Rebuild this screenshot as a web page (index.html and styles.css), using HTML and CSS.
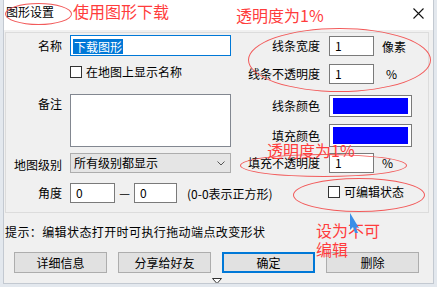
FILE: index.html
```html
<!DOCTYPE html>
<html>
<head>
    <meta charset="utf-8">
    <link rel="stylesheet" href="styles.css">
</head>
<body>
    <div class="dialog">
        <div class="titlebar">
            <span class="title">图形设置</span>
            <span class="close">
                <svg width="11" height="11" viewBox="0 0 11 11"><path d="M0.5 0.5 L10.5 10.5 M10.5 0.5 L0.5 10.5" stroke="#111" stroke-width="1.1"/></svg>
            </span>
        </div>
        <div class="content">
            <div class="groupbox">
                <!-- row 1 -->
                <div class="lbl row1 col1">名称</div>
                <div class="field focus row1 col2"><span class="sel">下载图形</span></div>
                <div class="lbl lbl-r row1 col3 top1">线条宽度</div>
                <div class="field num row1 col4 top1">1</div>
                <div class="unit row1 col5 unit-low">像素</div>

                <!-- row 2 -->
                <div class="check row2 col23">
                    <span class="box"></span>在地图上显示名称
                </div>
                <div class="lbl lbl-r row2 col3">线条不透明度</div>
                <div class="field num row2 col4">1</div>
                <div class="unit pct row2 col5">%</div>

                <!-- rows 3 / 4 -->
                <div class="lbl row3 col1">备注</div>
                <div class="memo row34 col2"></div>
                <div class="lbl lbl-r row3 col3 top1 h22">线条颜色</div>
                <div class="swatch row3 col45 top1"><span></span></div>
                <div class="lbl lbl-r row4 col3 h23">填充颜色</div>
                <div class="swatch tall row4 col45"><span></span></div>

                <!-- row 5 -->
                <div class="lbl row5 col1 h24">地图级别</div>
                <div class="select row5 col2">
                    所有级别都显示
                    <svg class="chev" width="8" height="5" viewBox="0 0 8 5"><path d="M0.5 0.5 L4 4 L7.5 0.5" fill="none" stroke="#555" stroke-width="1"/></svg>
                </div>
                <div class="lbl lbl-r row5 col3">填充不透明度</div>
                <div class="field num row5 col4">1</div>
                <div class="unit row5 col5">%</div>

                <!-- row 6 -->
                <div class="lbl row6 col1">角度</div>
                <div class="angle row6 col24">
                    <div class="field num a1">0</div>
                    <span class="dash">—</span>
                    <div class="field num a2">0</div>
                    <span class="note">(0-0表示正方形)</span>
                </div>
                <div class="check edit row6 col45">
                    <span class="box"></span>可编辑状态
                </div>
            </div>

            <div class="hint">提示：编辑状态打开时可执行拖动端点改变形状</div>

            <div class="buttons">
                <button class="btn">详细信息</button>
                <button class="btn">分享给好友</button>
                <button class="btn default">确定</button>
                <button class="btn">删除</button>
            </div>

            <div class="grip">
                <svg width="10" height="6" viewBox="0 0 10 6"><path d="M0.5 0.5 L9.5 0.5 L5 5.5 Z" fill="#fff" stroke="#333" stroke-width="1"/></svg>
            </div>
        </div>

        <!-- red annotations drawn on top of the dialog -->
        <div class="ring ring-title"></div>
        <div class="ring ring-line"></div>
        <div class="ring ring-fill"></div>
        <div class="ring ring-edit"></div>
        <div class="mark mark-download">使用图形下载</div>
        <div class="mark mark-alpha1">透明度为1%</div>
        <div class="mark mark-alpha2">透明度为1%</div>
        <div class="mark mark-edit">设为不可<br>编辑</div>
        <svg class="pointer" width="11" height="21" viewBox="0 0 11 21">
            <path d="M1 0 L10 15 L6.5 14 L9 20 L6 20 L4 14 L1 17 Z" fill="#3a8fe8"/>
        </svg>
    </div>
</body>
</html>
```

FILE: styles.css
```css
body {
    margin: 0;
    background-color: #e3e8ee;
    font-family: "Noto Sans CJK SC", "Noto Sans", sans-serif;
    font-size: 12px;
    color: #000;
}

.dialog {
    position: relative;
    width: 429px;
    height: 283px;
    margin-left: 3px;
    background-color: #f0f0f0;
    border-left: 1px solid #c3c9d1;
    border-right: 1px solid #c3c9d1;
    border-bottom: 1px solid #c3c9d1;
    overflow: hidden;
}

/* Title bar */
.titlebar {
    height: 30px;
    background-color: #fff;
    display: flex;
    justify-content: space-between;
    align-items: flex-start;
    padding: 4px 0 0 2px;
    box-sizing: border-box;
    line-height: 16px;
}

.close {
    margin: 4px 9px 0 0;
    height: 11px;
}

.close svg {
    display: block;
}

.content {
    padding: 2px 4px 0 1px;
}

/* Group box with the form fields */
.groupbox {
    border: 1px solid #dcdcdc;
    padding: 2px 0 9px 0;
    display: grid;
    grid-template-columns: 64px 161px 98px 45px 1fr;
    grid-template-rows: 29px 30px 30px 29px 30px 20px;
}

.row1 { grid-row: 1; }
.row2 { grid-row: 2; }
.row3 { grid-row: 3; }
.row4 { grid-row: 4; }
.row34 { grid-row: 3 / 5; }
.row5 { grid-row: 5; }
.row6 { grid-row: 6; }

.col1 { grid-column: 1; }
.col2 { grid-column: 2; }
.col3 { grid-column: 3; }
.col4 { grid-column: 4; }
.col5 { grid-column: 5; }
.col23 { grid-column: 2 / 4; }
.col24 { grid-column: 2 / 4; }
.col45 { grid-column: 4 / 6; }

.top1 { margin-top: 1px; }

.lbl {
    text-align: right;
    padding-right: 8px;
    line-height: 20px;
    white-space: nowrap;
    align-self: start;
}

.lbl-r {
    padding-right: 9px;
}

.row1.col1 { line-height: 21px; }
.row1.col3 { line-height: 19px; }
.h22 { line-height: 22px; }
.h23 { line-height: 23px; }
.h24 { line-height: 24px; }

/* Text boxes */
.field {
    box-sizing: border-box;
    height: 20px;
    background-color: #fff;
    border: 1px solid #7a7a7a;
    line-height: 18px;
    align-self: start;
}

.field.num {
    padding-left: 5px;
}

.field.focus {
    height: 21px;
    border-color: #0078d7;
    padding: 2px 0 0 2px;
}

.sel {
    display: inline-block;
    background-color: #0078d7;
    color: #fff;
    line-height: 15px;
    padding: 0 1px;
}

.unit {
    padding-left: 8px;
    line-height: 20px;
    align-self: start;
}

.unit-low {
    line-height: 24px;
}

.pct {
    padding-left: 12px;
}

/* Checkboxes */
.check {
    display: flex;
    align-items: center;
    gap: 4px;
    line-height: 16px;
    margin-top: 0;
    align-self: start;
    white-space: nowrap;
}

.box {
    width: 12px;
    height: 12px;
    box-sizing: border-box;
    border: 1px solid #333;
    background-color: #fff;
}

.check.edit {
    margin: 1px 0 0 -1px;
}

.memo {
    box-sizing: border-box;
    height: 53px;
    background-color: #fff;
    border: 1px solid #828790;
}

/* Colour swatches */
.swatch {
    box-sizing: border-box;
    width: 83px;
    height: 22px;
    border: 1px solid #7a7a7a;
    background-color: #fff;
    padding: 2px 3px;
    display: flex;
    align-self: start;
}

.swatch.tall {
    height: 23px;
}

.swatch span {
    flex: 1;
    background-color: #0000ff;
}

/* Drop-down */
.select {
    box-sizing: border-box;
    height: 20px;
    border: 1px solid #adadad;
    background-color: #e5e5e5;
    padding-left: 3px;
    line-height: 18px;
    display: flex;
    justify-content: space-between;
    align-items: center;
    align-self: start;
}

.chev {
    margin-right: 5px;
}

/* Angle row */
.angle {
    display: flex;
    align-items: center;
    height: 20px;
    white-space: nowrap;
}

.angle .a1 {
    width: 45px;
}

.angle .a2 {
    width: 43px;
}

.dash {
    width: 19px;
    text-align: center;
    line-height: 20px;
}

.note {
    margin-left: 10px;
}

.hint {
    margin-top: 11px;
    line-height: 16px;
    letter-spacing: 0.4px;
}

/* Buttons */
.buttons {
    display: flex;
    gap: 11px;
    margin-top: 12px;
    padding-left: 9px;
}

.btn {
    width: 93px;
    height: 21px;
    box-sizing: border-box;
    background-color: #e1e1e1;
    border: 1px solid #adadad;
    font-family: "Noto Sans CJK SC", "Noto Sans", sans-serif;
    font-size: 12px;
    line-height: 17px;
    padding: 0;
    color: #000;
}

.btn.default {
    border: 2px solid #0078d7;
}

.grip {
    display: flex;
    justify-content: center;
    margin-top: 5px;
}

.grip svg {
    display: block;
}

/* Red hand-drawn annotations */
.ring {
    position: absolute;
    border: 1px solid #f25a5a;
    border-radius: 50%;
}

.ring-title { left: 1px; top: 3px; width: 65px; height: 20px; }
.ring-line { left: 244px; top: 28px; width: 181px; height: 62px; }
.ring-fill { left: 236px; top: 154px; width: 165px; height: 21px; }
.ring-edit { left: 289px; top: 178px; width: 130px; height: 32px; }

.mark {
    position: absolute;
    color: #ff3c3c;
    font-size: 16px;
    line-height: 19px;
    white-space: nowrap;
}

.mark-download { left: 69px; top: 2px; }
.mark-alpha1 { left: 232px; top: 6px; }
.mark-alpha2 { left: 263px; top: 141px; }
.mark-edit { left: 312px; top: 221px; }

.pointer {
    position: absolute;
    left: 345px;
    top: 213px;
}
```
